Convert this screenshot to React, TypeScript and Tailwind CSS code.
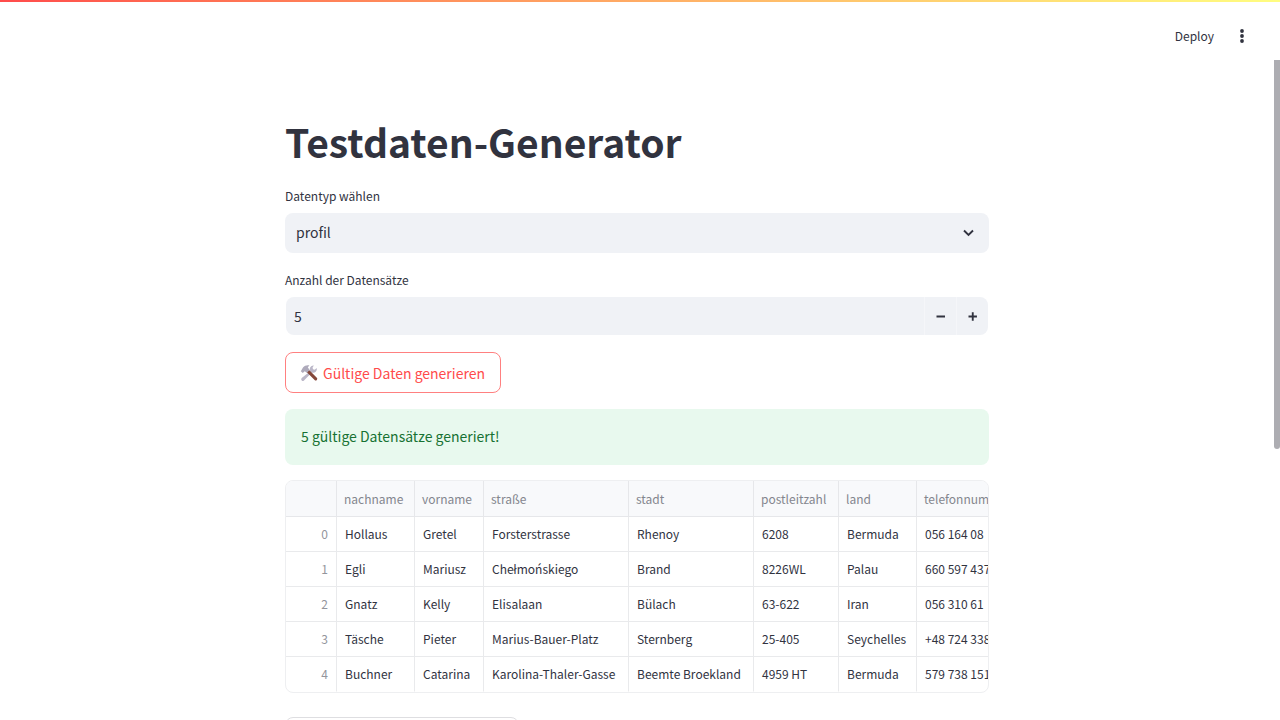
import { useState } from "react";

const columns = [
  { name: "nachname", width: "w-[78px]" },
  { name: "vorname", width: "w-[69px]" },
  { name: "straße", width: "w-[145px]" },
  { name: "stadt", width: "w-[125px]" },
  { name: "postleitzahl", width: "w-[85px]" },
  { name: "land", width: "w-[78px]" },
  { name: "telefonnummer", width: "w-[120px]" },
];

const rows = [
  ["Hollaus", "Gretel", "Forsterstrasse", "Rhenoy", "6208", "Bermuda", "056 164 08"],
  ["Egli", "Mariusz", "Chełmońskiego", "Brand", "8226WL", "Palau", "660 597 437"],
  ["Gnatz", "Kelly", "Elisalaan", "Bülach", "63-622", "Iran", "056 310 61"],
  ["Täsche", "Pieter", "Marius-Bauer-Platz", "Sternberg", "25-405", "Seychelles", "+48 724 338"],
  ["Buchner", "Catarina", "Karolina-Thaler-Gasse", "Beemte Broekland", "4959 HT", "Bermuda", "579 738 151"],
];

function Toolbar() {
  return (
    <header className="flex h-[60px] shrink-0 items-center justify-end gap-[20px] pt-[12px] pr-[30px]">
      <button type="button" className="text-[12px] leading-[20px]">
        Deploy
      </button>
      <button type="button" aria-label="Menü" className="flex w-[16px] justify-center">
        <svg viewBox="0 0 16 16" className="size-[16px]" fill="currentColor">
          <circle cx="8" cy="3" r="1.9" />
          <circle cx="8" cy="8" r="1.9" />
          <circle cx="8" cy="13" r="1.9" />
        </svg>
      </button>
    </header>
  );
}

function ToolsIcon() {
  return (
    <svg viewBox="0 0 18 18" className="size-[18px]" aria-hidden="true">
      <path
        d="M4 16.400a1.600 1.600 0 0 1-2.300-2.300L10.200 7.200a3.700 3.700 0 0 1 3.600-5.600l-1.300 2.200.6 1.500 1.600.4 2-1.800a3.700 3.700 0 0 1-4.900 4.600z"
        fill="#bbb7c8"
      />
      <path d="M6.600 8 8.800 5.800l8 8a1.500 1.500 0 0 1-2.200 2.200z" fill="#84473a" />
      <path d="M.8 7.200 3 3.600C4.600 1.600 7 1 9.400 1.500L7.800 3.200 9.600 6 6.900 8.700 4.700 7.300 2.800 9.100z" fill="#aeaabb" />
    </svg>
  );
}

function NumberField({ value, onChange }: { value: number; onChange: (n: number) => void }) {
  return (
    <div className="h-[40px] p-px">
      <div className="flex h-full overflow-hidden rounded-[8px] bg-[#f0f2f6]">
        <input
          id="anzahl"
          type="number"
          value={value}
          onChange={(e) => onChange(Number(e.target.value))}
          className="min-w-0 flex-1 appearance-none bg-transparent px-[8px] text-[14px] outline-none [&::-webkit-inner-spin-button]:appearance-none"
        />
        <button
          type="button"
          aria-label="Weniger"
          onClick={() => onChange(Math.max(1, value - 1))}
          className="flex w-[32px] items-center justify-center border-l border-[#f5f6f9]"
        >
          <svg viewBox="0 0 8 8" className="size-[10px]" fill="currentColor">
            <path d="M.4 3.600h6.800v1.500H.4z" />
          </svg>
        </button>
        <button
          type="button"
          aria-label="Mehr"
          onClick={() => onChange(value + 1)}
          className="flex w-[32px] items-center justify-center border-l border-[#f5f6f9]"
        >
          <svg viewBox="0 0 8 8" className="size-[10px]" fill="currentColor">
            <path d="M3.050 1h1.500v2.600h2.600v1.500h-2.600v2.600h-1.500V5.100H.4V3.600h2.650z" />
          </svg>
        </button>
      </div>
    </div>
  );
}

function DataTable() {
  return (
    <div className="overflow-hidden rounded-[8px] border border-[#eeeff1]">
      <table className="w-[751px] table-fixed border-separate border-spacing-0 text-left text-[12px] leading-[18px]">
        <thead>
          <tr className="h-[36px] bg-[#f8f9fb] text-[#84868e]">
            <th scope="col" aria-label="Index" className="w-[51px] border-r border-b border-[#e6e7ea]" />
            {columns.map((c) => (
              <th
                key={c.name}
                scope="col"
                className={`${c.width} border-r border-b border-[#e6e7ea] px-[7px] font-normal whitespace-nowrap`}
              >
                {c.name}
              </th>
            ))}
          </tr>
        </thead>
        <tbody>
          {rows.map((row, i) => (
            <tr key={row[0]} className="group h-[35px]">
              <th
                scope="row"
                className="border-r border-b border-[#e9eaec] pr-[8px] text-right font-normal text-[#93959c] group-last:border-b-transparent"
              >
                {i}
              </th>
              {row.map((cell, j) => (
                <td
                  key={columns[j].name}
                  className="border-r border-b border-[#e9eaec] pl-[8px] whitespace-nowrap group-last:border-b-transparent"
                >
                  {cell}
                </td>
              ))}
            </tr>
          ))}
        </tbody>
      </table>
    </div>
  );
}

export default function App() {
  const [count, setCount] = useState(5);
  return (
    <div className="flex h-screen flex-col overflow-hidden bg-white font-['Noto_Sans_CJK_SC','Noto_Sans',sans-serif] text-[#31333f]">
      <div className="-mb-[2px] h-[2px] shrink-0 bg-linear-to-r from-[#ff4b4b] to-[#fffd80]" />
      <Toolbar />
      <div className="flex min-h-0 flex-1">
        <main className="min-w-0 flex-1 overflow-hidden">
          <div className="mx-auto flex max-w-[736px] flex-col px-[16px] pt-[55px]">
            <h1 className="text-[39px] leading-[52px] font-bold">Testdaten-Generator</h1>

            <label htmlFor="datentyp" className="mt-[17px] text-[12px] leading-[24px]">
              Datentyp wählen
            </label>
            <div className="relative mt-[5px] flex">
              <select
                id="datentyp"
                defaultValue="profil"
                className="h-[40px] w-full appearance-none rounded-[8px] bg-[#f0f2f6] px-[11px] pb-[2px] text-[14px]"
              >
                <option>profil</option>
              </select>
              <svg
                viewBox="0 0 12 8"
                className="pointer-events-none absolute top-[16px] right-[15px] h-[8px] w-[12px]"
                fill="none"
                stroke="currentColor"
                strokeWidth="1.9"
              >
                <path d="M2 1.500 6.500 6 11 1.500" />
              </svg>
            </div>

            <label htmlFor="anzahl" className="mt-[15px] mb-[4px] text-[12px] leading-[24px]">
              Anzahl der Datensätze
            </label>
            <NumberField value={count} onChange={setCount} />

            <button
              type="button"
              className="mt-[16px] flex h-[41px] items-center gap-[5px] self-start rounded-[8px] border border-[#ff8080] pr-[15px] pl-[14px] text-[14px] leading-[24px] text-[#ff4b4b]"
            >
              <ToolsIcon />
              Gültige Daten generieren
            </button>

            <div
              role="status"
              className="mt-[16px] rounded-[8px] bg-[#e8f9ee] px-[16px] pt-[15px] pb-[17px] text-[14px] leading-[24px] text-[#177233]"
            >
              5 gültige Datensätze generiert!
            </div>

            <div className="mt-[15px]">
              <DataTable />
            </div>

            <button
              type="button"
              aria-label="Weitere Aktion"
              className="mt-[24px] h-[40px] w-[234px] shrink-0 rounded-[8px] border border-[#dedee1]"
            />
          </div>
        </main>
        <div className="w-[6px] shrink-0">
          <div className="h-[59%] rounded-b-[3px] bg-[#adadb2]" />
        </div>
      </div>
    </div>
  );
}
